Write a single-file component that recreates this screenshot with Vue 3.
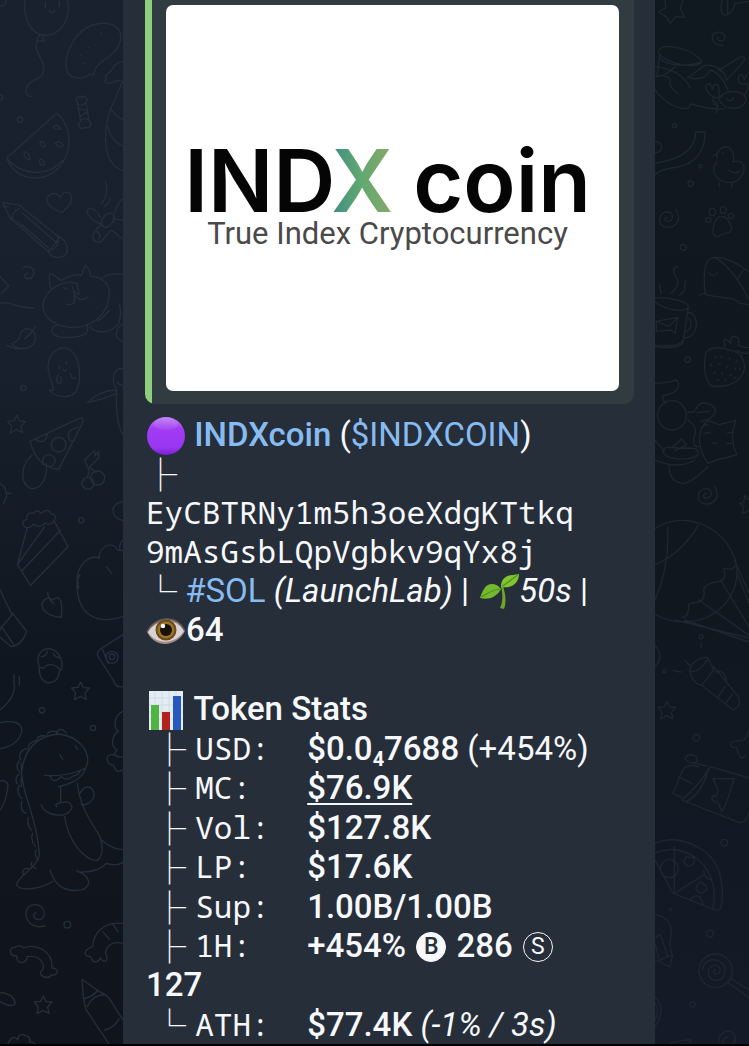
<template>
  <main class="chat">
    <div class="wall" aria-hidden="true">
      <svg viewBox="0 0 369 3138" preserveAspectRatio="xMinYMin slice">
        <g v-for="(d, i) in leftDoodles" :key="i"><path :d="d" /></g>
      </svg>
    </div>

    <article class="bubble">
      <div class="preview">
        <div class="photo">
          <div class="logo"><span>IND<span class="logo-x">X</span></span><span>coin</span></div>
          <div class="tagline">True Index Cryptocurrency</div>
        </div>
      </div>

      <section class="block">
        <p class="line">
          <svg class="emoji" viewBox="0 0 40 40">
            <defs>
              <linearGradient id="ball" x1="0" y1="0" x2="0" y2="1">
                <stop offset="0" stop-color="#c084f5" />
                <stop offset=".3" stop-color="#a23cf4" />
                <stop offset=".8" stop-color="#9a35f2" />
                <stop offset="1" stop-color="#7a1fd0" />
              </linearGradient>
            </defs>
            <circle cx="20" cy="20" r="19" fill="url(#ball)" />
            <ellipse cx="20" cy="8" rx="12" ry="6" fill="#d5a8fa" opacity=".15" />
          </svg>
          <a href="#" class="strong"> INDXcoin</a> (<a href="#">$INDXCOIN</a>)
        </p>
        <p class="line"><span class="tree">├</span></p>
        <p class="line mono">EyCBTRNy1m5h3oeXdgKTtkq</p>
        <p class="line mono">9mAsGsbLQpVgbkv9qYx8j</p>
        <p class="line">
          <span class="tree">└</span> <a href="#">#SOL</a> <em>(LaunchLab)</em> |
          <svg class="emoji sprout" viewBox="0 0 40 40">
            <path d="M22 15C24 22 24 30 21 36L25 37C28 30 26 20 24 14z" fill="#6fa52c" />
            <path d="M22 17C17 10 8 11 5 17C3 20 2 23 1 26C9 28 17 26 22 17z" fill="#72b92d" />
            <path d="M22 15C22 6 28 3 34 3L40 2C40 10 34 17 22 15z" fill="#82c532" />
            <path d="M2 25C8 22 14 17 22 17M23 14C28 12 32 7 39 3" fill="none" stroke="#4d8f1d" stroke-width="1.2" />
          </svg><em>50s</em> |
        </p>
        <p class="line">
          <svg class="emoji" viewBox="0 0 40 40">
            <path d="M1 21C8 7 29 1 39 20C31 36 9 38 1 21z" fill="#a58d86" />
            <path d="M2 21C9 9 29 5 38 20C30 33 10 35 2 21z" fill="#d9d3d5" />
            <circle cx="20" cy="19" r="10.5" fill="#6a4a18" />
            <circle cx="20" cy="19" r="8.5" fill="#9a7428" />
            <circle cx="20" cy="19" r="6" fill="#17100b" />
            <circle cx="17" cy="15" r="2.2" fill="#fff" />
            <path d="M1 21C8 6 30 2 39 20" fill="none" stroke="#6d5a55" stroke-width="1.6" />
          </svg><b>64</b>
        </p>
      </section>

      <section class="block stats">
        <p class="line">
          <svg class="emoji" viewBox="0 0 40 40">
            <path d="M3 1H37V40H3z" fill="#e3ebf3" />
            <path d="M3 8H37M3 15H37M3 22H37M3 29H37M9 1V40M16 1V40M23 1V40M30 1V40" stroke="#d3dde8" />
            <path d="M5 15H13V40H5z" fill="#4fb540" />
            <path d="M16 22H24V40H16z" fill="#b3221d" />
            <path d="M27 6H35V40H27z" fill="#2759bd" />
          </svg>
          <b> Token Stats</b>
        </p>
        <p v-for="s in stats" :key="s.label" class="line">
          <span class="tree">{{ s.branch }}</span> <span class="mono label">{{ s.label }}:</span><b
            :class="{ under: s.under }">{{ s.value }}<template v-if="s.sub"><span class="sub">{{ s.sub }}</span>{{ s.rest }}</template></b>
          <template v-if="s.note">&nbsp;<component :is="s.noteTag">{{ s.note }}</component></template>
          <template v-if="s.buys">&nbsp;<span class="coin filled">B</span> <b>{{ s.buys }}</b> <span class="coin">S</span><br><b>{{ s.sells }}</b></template>
        </p>
      </section>
    </article>

    <div class="wall wall-right" aria-hidden="true">
      <svg viewBox="30 0 282 3138" preserveAspectRatio="xMinYMin slice">
        <g v-for="(d, i) in rightDoodles" :key="i"><path :d="d" /></g>
      </svg>
    </div>
  </main>
</template>

<script setup>
const stats = [
  { branch: '├', label: 'USD', value: '$0.0', sub: '4', rest: '7688', note: '(+454%)', noteTag: 'span' },
  { branch: '├', label: 'MC', value: '$76.9K', under: true },
  { branch: '├', label: 'Vol', value: '$127.8K' },
  { branch: '├', label: 'LP', value: '$17.6K' },
  { branch: '├', label: 'Sup', value: '1.00B/1.00B' },
  { branch: '├', label: '1H', value: '+454%', buys: '286', sells: '127' },
  { branch: '└', label: 'ATH', value: '$77.4K', note: '(-1% / 3s)', noteTag: 'em' },
];

// a small ring, used as confetti between the bigger doodles
const ring = (x, y, r = 8) => `M${x - r} ${y}a${r} ${r} 0 1 0 ${2 * r} 0a${r} ${r} 0 1 0 ${-2 * r} 0`;
const star = (x, y) => `M${x} ${y - 26}l8 17 18 1-13 15 4 19-18-9-18 10 4-20-12-15 19-2z`;
const swirl = (x, y) =>
  `M${x + 2} ${y}c-10-4-12 12 0 12c18 0 20-26 0-28c-26-2-34 36-10 44c24 8 46-10 42-34c-1-8-4-12-8-18`;

const leftDoodles = [
  // balloon
  'M76 0C68 50 90 106 138 106C186 104 214 50 202 0M136 6v18M178 4v18M148 32q8 14 16-2M118 106l-8 16 22 2-6-18M112 124C96 150 134 180 132 208C130 240 88 238 80 262C74 280 82 290 96 290',
  // potato
  'M286 205C300 180 352 165 362 120C368 70 312 58 262 82C216 106 190 176 200 210C208 240 250 240 270 222L280 226z',
  'M264 140l3 1M240 165l2 1M282 134l3 1M252 190l2 1M302 100l3 1',
  // candy
  'M232 306c-10-12 2-18 10-14c8-8 24 2 16 14l8 54c12 14 4 28-10 22c-16 10-26-6-14-18zM234 312q14 8 24-4M232 324q16 8 30 6M240 350q14-12 26-14M242 360q14-8 24 0',
  // watermelon
  'M170 340C208 370 218 430 194 478C160 550 50 556 20 474zM20 474C60 524 140 536 190 480',
  'M160 380q12-10 22 6q-12 8-22-6M120 426q10-6 16 14q-14 6-16-14M166 430q14-12 24 6q-14 12-24-6M72 456q12-4 18 22q-16 4-18-22M118 480q10-8 16 14q-16 8-16-14',
  'M316 240C312 260 334 246 362 240M320 240C308 226 330 220 342 200Q352 184 372 184M368 244L334 322C312 380 300 490 369 512M334 330Q350 350 369 358M324 380Q330 420 369 440',
  'M186 638C160 630 130 606 144 590C152 576 172 578 180 592C186 576 208 570 214 588C220 610 196 628 186 638z',
  // pencil
  'M8 608L52 614Q64 616 72 628L178 712L146 756L38 660Q30 658 26 646zM10 620h16M58 626Q36 634 36 656M68 640L172 730M52 664L146 744M174 710C178 740 160 752 142 752M178 710C206 728 212 764 182 772C160 774 152 768 144 756',
  'M316 544Q328 580 304 612M330 592Q328 610 314 620M302 652C278 612 254 626 264 642C274 664 292 666 304 672L284 694C270 716 284 730 302 726L334 690M304 668C310 640 340 628 342 650C344 672 308 700 304 668M340 656Q350 660 369 660M334 690L369 718M344 640Q356 600 369 596M290 694q16 10 8 20',
  'M70 802Q98 794 102 818Q98 838 80 836Q66 826 84 818M0 830L26 858L6 878M0 908Q28 908 40 914T100 924',
  // cat
  'M152 866C146 830 144 812 162 826Q172 834 184 842M184 842C210 826 232 822 244 826L256 796Q270 806 272 828C300 832 330 846 328 882C326 940 280 984 210 982C150 976 124 940 130 908C136 880 166 848 214 846M190 862l10 6M216 852q6-10 12 0M232 850v14q8 10 4 20q-10-6-16-12M218 860q8 30 4 48q-10 10-26 4M224 884q16 26 40 6M172 974C146 984 154 1008 184 1012C240 1014 270 1006 262 978M304 834Q336 816 369 824M270 980C280 998 330 1006 356 970Q366 940 358 912M328 930q-16 22-34 32M368 972c-28 20-24 46 1 52',
  'M36 1032Q62 1020 62 1000C76 976 100 986 106 1006C110 1050 56 1056 36 1032M74 1016Q96 1000 106 980M20 1036Q60 1055 92 1040',
  ring(60, 359), ring(4, 4, 14), ring(70, 1164), ring(244, 1561), ring(126, 2131), ring(279, 2184), ring(202, 2774, 10), ring(0, 292, 8),
  // ghost
  'M148 1170C176 1180 146 1146 144 1100C146 1040 210 1020 232 1080C246 1130 240 1190 196 1190C170 1190 156 1182 148 1170M174 1124q-10 28 6 26q8-4 2-20M210 1118q4 22 18 16M178 1098v8M190 1108q4 10 10 0M198 1084l2 8',
  star(50, 1272),
  // pizza slice
  'M90 1324L236 1256Q254 1250 248 1268L176 1408Q110 1400 90 1324M106 1318q30 20 36-18M154 1334a22 22 0 1 0 44 0a22 22 0 1 0-44 0M208 1318q-12-28 26-36M208 1318q6 10 16 2M130 1394c-10-40 34-36 36-12q-8 26-30 12M96 1366C66 1390 54 1446 92 1466C130 1470 144 1420 138 1390',
  // cherries
  'M246 1450a18 18 0 1 0 36 0a18 18 0 1 0-36 0M272 1434a21 21 0 1 0 42 0a21 21 0 1 0-42 0M262 1430Q272 1410 264 1404L254 1380L282 1352Q288 1362 284 1368L296 1354L296 1374L268 1402L288 1416',
  'M262 1208Q300 1170 350 1170M262 1208Q310 1198 352 1180M369 1106C338 1100 332 1150 350 1166C346 1220 352 1280 369 1304M352 1146q2 8 17 10M0 1450Q20 1460 20 1490L10 1512M20 1480h12',
  // cake
  'M76 1582q-18-16 4-24q-2-22 20-18q10-14 24 0q20-18 28 0q24 4 8 26q-16 14-24 2q-18 20-36 4q-8 14-24 10M82 1582L52 1694L92 1756L204 1640L164 1566M52 1694L134 1580M66 1712L182 1590',
  'M369 1504c-40 8-40 46 0 58M369 1850C290 1876 222 1846 232 1730C238 1690 268 1664 298 1674C296 1640 336 1620 352 1650L369 1652M360 1650q-4-20 9-30M320 1700l14 20M240 1724q-10 10-4 40',
  'M184 1852C150 1850 118 1830 128 1806C140 1788 154 1796 158 1800C174 1786 190 1790 184 1852M144 1776Q140 1794 162 1812M0 1770L36 1844C20 1870 0 1880 0 1890M38 1840L80 1894Q66 1936 34 1940L0 1912M4 1880l36 52',
  // acorn
  'M118 2000C100 1960 140 1930 170 1956C190 1976 190 2010 178 2014C176 2040 160 2050 142 2048C120 2040 116 2020 118 2000M118 2000Q130 2010 140 1996Q160 1988 182 2010M124 1970q14 0 18-16M160 1960q0 10 22 14',
  'M369 1904L306 1944Q292 1952 292 1966L340 2040Q346 2064 369 2060M318 1972a18 18 0 1 0 36 0a18 18 0 1 0-36 0M328 1970a8 8 0 1 0 16 0a8 8 0 1 0-16 0M306 1944L324 1990M42 2024v26M58 2030v26',
  star(242, 2072),
  'M42 2050Q50 2090 0 2130M0 2168Q60 2156 66 2190Q58 2236 0 2246M0 2342Q30 2340 22 2370Q16 2410 0 2430',
  // dinosaur
  'M64 2360C60 2270 90 2210 176 2202C232 2208 270 2250 262 2290C252 2334 220 2350 176 2360M134 2326Q200 2332 258 2304M150 2328q10 26 34 2q14 16 36-2q14-2 22-16M64 2290C60 2380 110 2440 118 2560C118 2600 50 2630 50 2654C60 2676 130 2666 158 2644M150 2610C164 2660 200 2680 250 2668C280 2650 264 2626 230 2612M182 2360v48q-20 4-12 12M124 2414C132 2450 210 2460 216 2420Q210 2400 184 2408M194 2450C204 2520 250 2580 290 2582C310 2570 310 2540 300 2510C270 2460 240 2420 232 2350M240 2380C260 2340 290 2370 280 2394Q268 2416 244 2414M304 2520Q340 2550 369 2548M234 2616Q290 2620 320 2590Q346 2600 369 2588M180 2264l8 14M226 2238l6 10',
  'M170 2200q10-24 30 0M142 2204q4-16 28-8M110 2220q4-16 28-12M84 2246q0-20 26-24M62 2280q-10-26 18-34M58 2316q-14-18 0-32M52 2352q-10-20 6-30M66 2396q-20-20-8-40M78 2440q-20-10-12-36M94 2490q-16-20-8-38M106 2540q-16-20-8-40M114 2580q-12-12-6-30M108 2606q-20-8-12-20M70 2626q-6-24 18-20',
  'M369 2134c-26 10-30 50-14 60c-20 14-24 44-4 56c-16 16 0 24 18 20M352 2268c-40-18-38 26-12 28c12 30 20 14 29 14',
  'M134 2778C84 2792 62 2736 90 2718C120 2704 146 2734 126 2756C104 2766 94 2744 108 2738',
  // bone
  'M70 2844C104 2830 160 2850 156 2904C182 2906 172 2930 154 2924C146 2940 118 2930 122 2914C140 2906 128 2862 82 2870C76 2896 50 2892 50 2868C26 2870 26 2840 44 2842C54 2836 66 2836 70 2844',
  star(130, 3014),
  'M369 2770C310 2764 280 2800 278 2840C248 2850 250 2870 272 2870C280 2900 300 2880 300 2874C320 2900 326 2870 316 2860C320 2830 346 2824 369 2830M308 2794l20 24M340 2774l14 22M0 2978Q40 2980 46 3010Q34 3026 0 3004',
  'M246 2938L250 2990Q256 3026 260 3032L326 3130M246 2938L296 2974Q316 2980 328 2996L369 3060M252 2996Q280 2990 294 2970M262 3020Q278 2984 316 2984M356 3056Q346 3082 314 3090M24 3130q16-30 30-10q-2-24 26-12q14 4 8 18q14-2 22 12',
];

const rightDoodles = [
  'M76 70L64 50L40 36L62 24L60 0M76 70L92 50L118 52L106 26L114 0M232 0Q220 40 242 46Q266 36 270 10L312 4M248 0v40',
  'M234 136C206 138 190 110 212 98C232 92 246 106 236 120C226 128 212 118 220 112',
  // cooking pot and crab
  'M40 156C40 126 130 138 170 182C170 210 60 196 40 156M44 164L36 230M170 186Q90 210 44 176M30 270C60 310 100 330 132 324L136 312Q200 330 240 326M30 200Q110 210 136 264M60 230q20 0 14 20q8 24 26 30M128 234L180 196C200 194 220 200 230 216M30 230Q60 230 90 200M220 212L284 172Q304 164 296 184L244 242C240 220 232 208 222 210M136 234Q180 244 196 210Q230 220 250 274M222 300C230 266 300 266 304 300C290 334 240 332 222 300M222 292C200 300 170 260 188 252Q198 248 202 268Q206 246 220 256Q224 280 222 292M246 298q10 10 20-4M300 284Q312 264 308 250C278 260 272 230 290 222L298 238L306 222M206 294l-4 8 14 8M206 312l12 4-4 24',
  ring(89, 377, 6), ring(166, 499, 5), ring(137, 551), ring(115, 742, 9), ring(128, 1079), ring(168, 1910, 6), ring(58, 2014, 5), ring(154, 2213, 10), ring(238, 2528, 10), ring(195, 2801, 10), ring(143, 3013), ring(76, 2728, 3),
  'M30 490C90 480 150 460 152 396L180 396C180 480 120 500 80 504Q50 508 30 524M30 424c28 0 24 36 0 34',
  // chick
  'M216 474C210 436 266 424 266 474L264 486C310 470 308 540 258 548C210 548 194 510 216 484M250 510q20 14 34 4M222 546v14M260 548v14M204 468l10-4M232 458l2 2',
  swirl(66, 652),
  'M204 684C210 664 214 650 228 650C244 646 252 664 260 682C260 706 236 694 218 710C204 710 204 700 204 684M192 636a9 10 0 1 0 20 0a9 10 0 1 0-20 0M226 630a9 10 0 1 0 18 0a9 10 0 1 0-18 0M250 648a8 8 0 1 0 16 0a8 8 0 1 0-16 0M182 660a8 7 0 1 0 16 0a8 7 0 1 0-16 0',
  'M180 880C176 830 174 772 208 772C250 770 290 800 312 816M164 886Q176 876 190 886C240 896 270 890 286 910L312 914M210 772Q270 810 312 900M190 818q14 16 28 0M294 810l-16 28',
  // mug
  'M30 894C50 890 130 900 130 920C122 940 60 930 30 906M130 920L114 1028Q90 1050 30 1040M126 938C160 930 170 1010 118 1014M128 954C144 960 140 990 120 996M34 964L98 952L90 1000L78 990L34 994zM40 966L72 980L98 952M42 854q4 6 6 26M98 800Q78 804 90 826Q112 850 78 880M122 842q-4 10-2 20t-16 24',
  // strawberry
  'M182 1060C190 1040 230 1040 258 1052C296 1054 304 1100 294 1120C280 1150 240 1164 200 1158C176 1140 176 1090 182 1060M240 1040Q230 1000 256 1030Q260 1000 272 1012Q286 1010 280 1036Q300 1044 312 1042M276 1052Q300 1066 312 1056',
  'M208 1068l6 4M232 1070l-4 4M252 1074l4 4M276 1080l-4 6M198 1092l2 6M222 1094l4-4M246 1098l-2 6M268 1104l4 4M284 1110v-6M206 1120l6-4M230 1118l2 6M254 1126l6-2M216 1140l6-2M240 1142l2-6M266 1134l6-2M30 1036Q100 1044 116 1020',
  'M30 1150Q80 1148 90 1140C110 1144 106 1180 56 1186Q46 1190 62 1210M38 1246a43 44 0 1 0 86 0a43 44 0 1 0-86 0M128 1236Q150 1242 156 1220C170 1200 210 1210 212 1236Q200 1260 168 1264M154 1238l38-4M190 1390C150 1340 160 1280 190 1262L222 1274L272 1262L262 1300L266 1340L276 1364L240 1374Q210 1380 190 1390M170 1282q10-10 20-8M176 1302q12-8 20-2M204 1328l12 2M246 1330h14M248 1298h18M54 1354C60 1330 90 1350 130 1344C170 1344 170 1370 130 1376Q60 1380 54 1354M30 1380Q100 1410 150 1380M72 1390Q70 1450 120 1450Q150 1440 188 1400M128 1260Q160 1280 148 1310Q140 1340 160 1340M30 1320l28 34M84 1340l26-24 14 20-34 16',
  swirl(182, 1482),
  'M312 1500l-12-14-4 22-12 2 12 8-4 22 20-8',
  // parachute
  'M30 1586C110 1530 240 1570 274 1690C290 1780 220 1876 90 1864Q50 1856 30 1842M68 1580Q74 1700 30 1800M160 1576Q110 1660 30 1694M272 1694C260 1720 240 1700 236 1706Q246 1740 222 1744Q180 1750 176 1770Q182 1800 160 1806Q120 1812 132 1820Q126 1860 112 1850M268 1680L312 1780M276 1720L312 1810M226 1740L312 1880M162 1800L312 1906M90 1860L312 1914M120 1860L312 1926',
  // torch
  'M134 2010C140 1980 180 1966 190 1976L206 2010L170 2056Q140 2050 134 2010M138 2014Q160 2020 190 1976M206 2000L280 2090Q290 2120 264 2130L170 2056M210 2016q30-10 34 30M242 2110l20-28M220 2090l20-30M30 1936Q60 1970 30 2000M168 1930v12M120 1982l14 14M84 2012l24 4',
  star(66, 2130),
  'M312 2190Q300 2230 278 2222C250 2224 250 2244 276 2244Q284 2290 304 2264M196 2300L312 2334M110 2400L284 2468Q300 2470 312 2440M110 2400Q160 2360 196 2300M84 2380L114 2308Q130 2290 160 2300M84 2380L110 2392M100 2330L140 2350M126 2404Q170 2380 190 2310M204 2336L268 2336C250 2380 250 2410 230 2434L220 2410C190 2400 200 2380 214 2390L220 2370L204 2336M120 2276C130 2256 160 2264 156 2284Q136 2296 120 2276M150 2290l36 8',
  // pizza
  'M30 2530C100 2500 200 2540 224 2620Q240 2690 226 2726Q216 2736 200 2726L84 2680L30 2580M30 2560C110 2520 230 2590 204 2726M88 2540V2680L178 2624M46 2606a27 27 0 1 0 54 0a27 27 0 1 0-54 0M120 2578q6-14 14-4q16-8 14 12q-10 16-24 10q-10-8-4-18M158 2654q10-14 18 0q12 0 8 16q-18 16-24 4q-12 0-2-20M134 2700q30-30 40 14M176 2610q0 24 22 30',
  'M30 2744C84 2754 84 2790 74 2830L82 2870L74 2900L30 2880M34 2810L46 2802L68 2870M30 2830L42 2880M40 2884q30-20 40-16',
  // lollipop
  'M162 2912a50 50 0 1 0 100 0a50 50 0 1 0-100 0M212 2912C200 2904 204 2926 216 2922C236 2914 220 2890 206 2896C180 2904 188 2940 214 2942C244 2940 250 2900 224 2884C200 2872 176 2884 172 2910M250 2948L312 2994M258 2936L312 2970',
  'M30 2990Q66 3030 30 3080M30 3010q16 20 0 50M60 3138q40-20 80-18l-10 16M222 3136C214 3106 240 3086 260 3096C280 3110 270 3136 250 3136M234 3130q-2-20 14-18',
];
</script>

<style>
body { background: #000; }
</style>

<style scoped>
.chat {
  display: grid;
  grid-template-columns: 123fr 532fr 94fr;
  min-height: 100vh;
  box-sizing: border-box;
  border-bottom: 2px solid #000;
  overflow: hidden;
  font-family: Roboto, "Liberation Sans", sans-serif;
  font-size: 33px;
  line-height: 39px;
  color: #f6f8fb;
}

.wall {
  position: relative;
  overflow: hidden;
  background: linear-gradient(#18212d, #17202c 35%, #10161f 65%, #10151d);
}
.wall-right { background: linear-gradient(#101820, #10171f 55%, #141a27); }
.wall svg { position: absolute; top: 0; left: 0; width: 100%; height: 100%; }
.wall path {
  fill: none;
  stroke: #252f3b;
  stroke-width: 4;
  stroke-linejoin: round;
  stroke-linecap: round;
}
.wall-right path { stroke: #1e2731; }

.bubble { background: #262e39; padding: 0 21px 0 22px; }

.preview {
  padding: 5px 15px 13px 21px;
  background: linear-gradient(90deg, #8fce7c 7px, #303c3f 7px);
  border-radius: 0 0 10px 10px;
}
.photo {
  height: 386px;
  padding-right: 10px;
  border-radius: 7px;
  background: #fff;
  display: flex;
  flex-direction: column;
  align-items: center;
  justify-content: center;
  box-sizing: border-box;
}
.logo {
  display: flex;
  gap: 20px;
  font-family: Inter, "Liberation Sans", sans-serif;
  font-size: 86px;
  line-height: 72px;
  font-weight: 600;
  color: #050505;
}
.logo-x {
  background: linear-gradient(90deg, #3f8d84, #62a970 50%, #8aa868);
  -webkit-background-clip: text;
  background-clip: text;
  color: transparent;
}
.tagline { font-size: 31px; line-height: 34px; color: #4a4a4a; }

.block { padding: 11px 0 0 1px; }
.stats { padding-top: 40px; }
.line { margin: 0; height: 39px; white-space: nowrap; }
.stats .line { height: auto; }
.stats .line:nth-child(odd) { padding-bottom: 1px; }
.mono { font-family: "Noto Sans Mono", "DejaVu Sans Mono", monospace; font-size: 31px; }
.label { display: inline-block; width: 112px; height: 39px; vertical-align: top; }
.tree {
  display: inline-block;
  margin-left: -2px;
  font-family: "Noto Sans CJK JP", sans-serif;
  line-height: 39px;
  height: 39px;
  vertical-align: top;
}
.stats .tree { margin: 0 1px 0 7px; }
.emoji { width: 40px; height: 40px; margin: -4px 0; vertical-align: -6px; }
.sprout { margin-left: 2px; }

a { color: #86bcf2; text-decoration: none; }
b, .strong { font-weight: 500; }
.under { text-decoration: underline; text-decoration-thickness: 2px; text-underline-offset: 4px; }
.sub { font-size: 20px; font-weight: 700; line-height: 1; position: relative; top: 6px; }

.coin {
  display: inline-block;
  box-sizing: border-box;
  width: 30px;
  height: 30px;
  margin: 0 2px;
  border: 1px solid #f6f8fb;
  border-radius: 50%;
  font-size: 23px;
  line-height: 28px;
  text-align: center;
  vertical-align: 3px;
}
.filled { background: #f6f8fb; color: #262e39; font-weight: 500; }
</style>
